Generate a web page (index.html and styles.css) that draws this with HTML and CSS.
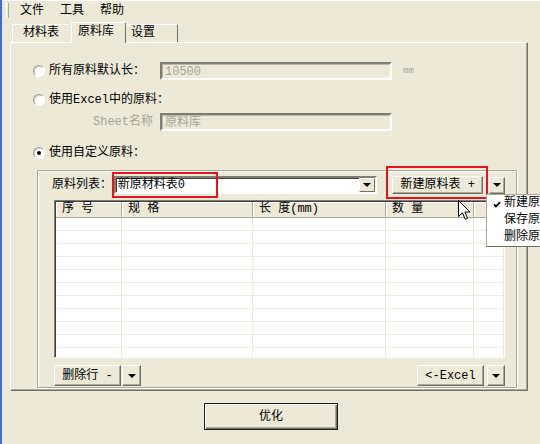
FILE: index.html
```
<html>
<head>
  <meta charset="UTF-8">
  <meta name="viewport" content="width=device-width, initial-scale=1.0">
  <title>原料库</title>
  <link rel="stylesheet" href="styles.css">
</head>
<body>
  <div class="window">
    <div class="menubar">
      <span class="grip"></span>
      <span class="menu-item">文件</span>
      <span class="menu-item">工具</span>
      <span class="menu-item">帮助</span>
    </div>

    <div class="tabs">
      <span class="tab tab-first">材料表</span>
      <span class="tab tab-active">原料库</span>
      <span class="tab tab-last">设置</span>
    </div>

    <div class="panel">
      <div class="option-row">
        <span class="radio"></span>
        <span class="option-label">所有原料默认长：</span>
        <span class="field">10500</span>
        <span class="unit">mm</span>
      </div>
      <div class="option-row row-excel">
        <span class="radio"></span>
        <span>使用Excel中的原料：</span>
      </div>
      <div class="option-row row-sheet">
        <span class="sheet-label">Sheet名称</span>
        <span class="field">原料库</span>
      </div>
      <div class="option-row row-custom">
        <span class="radio checked"></span>
        <span>使用自定义原料：</span>
      </div>

      <div class="group">
        <div class="list-row">
          <span class="list-label">原料列表：</span>
          <div class="combo">
            <span class="combo-text">新原材料表0</span>
            <span class="combo-arrow"><i class="arrow"></i></span>
            <span class="mark mark-combo"></span>
          </div>
          <button class="btn btn-new">新建原料表 +<span class="mark mark-new"></span></button>
          <button class="btn btn-drop drop-new"><i class="arrow"></i></button>
        </div>

        <div class="grid">
          <div class="grid-head">
            <span>序 号</span><span>规 格</span><span>长 度(mm)</span><span>数 量</span><span></span>
          </div>
          <div class="grid-row"><span></span><span></span><span></span><span></span><span></span></div>
          <div class="grid-row"><span></span><span></span><span></span><span></span><span></span></div>
          <div class="grid-row"><span></span><span></span><span></span><span></span><span></span></div>
          <div class="grid-row"><span></span><span></span><span></span><span></span><span></span></div>
          <div class="grid-row"><span></span><span></span><span></span><span></span><span></span></div>
          <div class="grid-row"><span></span><span></span><span></span><span></span><span></span></div>
          <div class="grid-row"><span></span><span></span><span></span><span></span><span></span></div>
          <div class="grid-row"><span></span><span></span><span></span><span></span><span></span></div>
          <div class="grid-row"><span></span><span></span><span></span><span></span><span></span></div>
          <div class="grid-row"><span></span><span></span><span></span><span></span><span></span></div>
          <div class="grid-row"><span></span><span></span><span></span><span></span><span></span></div>
        </div>

        <div class="action-row">
          <div class="split">
            <button class="btn btn-act">删除行 -</button>
            <button class="btn btn-drop drop-del"><i class="arrow"></i></button>
          </div>
          <div class="split split-right">
            <button class="btn btn-act">&lt;-Excel</button>
            <button class="btn btn-drop drop-excel"><i class="arrow"></i></button>
          </div>
        </div>
      </div>
    </div>

    <div class="footer">
      <button class="btn btn-run">优化</button>
    </div>

    <!-- dropdown of the 新建原料表 button, open (cut by the window edge) -->
    <div class="popup-menu">
      <div class="popup-item">
        <svg class="check" width="8" height="7" viewBox="0 0 8 7"><path d="M1 3.5 L3 5.5 L7 1" fill="none" stroke="#000" stroke-width="1.8"/></svg>
        新建原
      </div>
      <div class="popup-item">保存原</div>
      <div class="popup-item">删除原</div>
    </div>

    <svg class="cursor" width="13" height="21" viewBox="0 0 13 21">
      <path d="M0.5 0.5 L0.5 16.5 L4.5 12.8 L7.3 19.3 L9.6 18.3 L6.9 12 L12 12 Z" fill="#fff" stroke="#000" stroke-width="1" stroke-linejoin="miter"/>
    </svg>
  </div>
</body>
</html>
```

FILE: styles.css
```
body {
  margin: 0;
  background: #ece9d8;
}

.window {
  position: relative;
  width: 538px;
  height: 444px;
  overflow: hidden;
  border-left: 2px solid #3a6ce0;
  background: #ece9d8;
  color: #000;
  font-family: "Liberation Mono", "Noto Sans CJK SC", monospace;
  font-size: 12px;
  line-height: 14px;
}

/* menu bar */
.menubar {
  display: flex;
  align-items: center;
  height: 20px;
  padding-left: 4px;
  border-top: 1px solid #fff;
  box-sizing: border-box;
}

.grip {
  width: 1px;
  height: 15px;
  border-left: 1px solid #fff;
  border-right: 1px solid #aca899;
  margin-right: 3px;
}

.menu-item {
  padding: 0 8px;
}

/* tabs */
.tabs {
  display: flex;
  align-items: flex-end;
  height: 22px;
  padding-left: 10px;
}

.tab {
  box-sizing: border-box;
  height: 18px;
  line-height: 16px;
  border-top: 1px solid #fff;
  border-left: 1px solid #fff;
  border-right: 1px solid #716f64;
  border-radius: 2px 2px 0 0;
}

.tab-first {
  width: 59px;
  padding-left: 10px;
  border-right: none;
}

.tab-active {
  position: relative;
  z-index: 1;
  width: 55px;
  height: 21px;
  margin-bottom: -1px;
  padding-left: 6px;
  line-height: 18px;
  background: #ece9d8;
}

.tab-last {
  width: 52px;
  padding-left: 5px;
  border-left: none;
}

/* tab page */
.panel {
  box-sizing: border-box;
  width: 518px;
  height: 349px;
  margin-left: 8px;
  padding: 19px 0 0 22px;
  border-top: 1px solid #fff;
  border-left: 1px solid #fff;
  border-right: 1px solid #716f64;
  border-bottom: 1px solid #716f64;
  box-shadow: inset -1px -1px #aca899;
}

.option-row {
  display: flex;
  align-items: center;
  height: 18px;
}

.row-excel {
  margin-top: 11px;
}

.row-sheet {
  margin-top: 4px;
}

.row-custom {
  margin-top: 13px;
}

.radio {
  box-sizing: border-box;
  width: 12px;
  height: 12px;
  margin-right: 4px;
  border-radius: 50%;
  border: 1px solid;
  border-color: #9d9b90 #fff #fff #9d9b90;
  background: #fff;
  box-shadow: inset 1px 1px #d4d0c8;
  display: flex;
  align-items: center;
  justify-content: center;
}

.radio.checked::after {
  content: "";
  width: 4px;
  height: 4px;
  border-radius: 50%;
  background: #000;
}

.option-label {
  width: 111px;
}

.field {
  box-sizing: border-box;
  width: 232px;
  height: 18px;
  padding: 1px 0 0 3px;
  border: 2px solid;
  border-color: #807e74 #fff #fff #807e74;
  box-shadow: inset 1px 1px #b9b6a9;
  color: #a7a597;
  line-height: 14px;
}

.unit {
  margin-left: 11px;
  color: #a7a597;
  font-size: 9px;
}

.sheet-label {
  box-sizing: border-box;
  width: 127px;
  padding-right: 7px;
  text-align: right;
  color: #a7a597;
}

/* custom material group */
.group {
  box-sizing: border-box;
  width: 480px;
  height: 218px;
  margin: 8px 0 0 4px;
  padding: 5px 11px 0 16px;
  border: 1px solid #aca899;
  box-shadow: inset 1px 1px #fff, 1px 1px #fff;
}

.list-row {
  display: flex;
  align-items: center;
  height: 18px;
}

.list-label {
  width: 62px;
  margin-left: -2px;
}

.combo {
  position: relative;
  box-sizing: border-box;
  display: flex;
  align-items: center;
  width: 264px;
  height: 18px;
  border: 2px solid;
  border-color: #807e74 #fff #fff #807e74;
  box-shadow: inset 1px 1px #404040;
  background: #fff;
}

.combo-text {
  flex: 1;
  padding-left: 2px;
}

.combo-arrow {
  box-sizing: border-box;
  width: 16px;
  height: 14px;
  display: flex;
  align-items: center;
  justify-content: center;
  background: #ece9d8;
  border-top: 1px solid #fff;
  border-left: 1px solid #fff;
  border-right: 1px solid #716f64;
  border-bottom: 1px solid #716f64;
}

.arrow {
  width: 0;
  height: 0;
  border-left: 4px solid transparent;
  border-right: 4px solid transparent;
  border-top: 4px solid #000;
}

.btn {
  box-sizing: border-box;
  margin: 0;
  padding: 0;
  font: inherit;
  color: #000;
  background: #ece9d8;
  border: 1px solid;
  border-color: #fff #716f64 #716f64 #fff;
  box-shadow: inset -1px -1px #aca899;
  display: flex;
  align-items: center;
  justify-content: center;
}

.btn-new {
  position: relative;
  width: 91px;
  height: 18px;
  margin-left: 15px;
}

.btn-drop {
  width: 16px;
  height: 18px;
}

.drop-new {
  margin-left: 6px;
  height: 17px;
}

/* red annotation boxes */
.mark {
  position: absolute;
  border: 2px solid #e8121c;
  box-sizing: border-box;
  pointer-events: none;
}

.mark-combo {
  left: -4px;
  top: -6px;
  width: 106px;
  height: 26px;
}

.mark-new {
  left: -7px;
  top: -11px;
  width: 102px;
  height: 33px;
}

/* material grid */
.grid {
  box-sizing: border-box;
  height: 158px;
  margin-top: 6px;
  overflow: hidden;
  background: #fff;
  border: 1px solid;
  border-color: #807e74 #fff #fff #807e74;
  box-shadow: inset 1px 1px #404040;
  padding: 1px 0 0 1px;
}

.grid-head,
.grid-row {
  display: grid;
  grid-template-columns: 66px 131px 133px 88px 1fr;
}

.grid-head span {
  box-sizing: border-box;
  height: 16px;
  padding-left: 6px;
  line-height: 15px;
  background: #ece9d8;
  border-right: 1px solid #aca899;
  border-bottom: 1px solid #aca899;
  box-shadow: inset 1px 1px #fff;
}

.grid-row span {
  box-sizing: border-box;
  height: 13px;
  border-right: 1px solid #ebe9dd;
  border-bottom: 1px solid #ebe9dd;
}

.action-row {
  display: flex;
  justify-content: space-between;
  margin-top: 7px;
}

.split {
  display: flex;
  gap: 1px;
}

.split-right {
  gap: 3px;
}

.btn-act {
  width: 67px;
  height: 21px;
}

.drop-del {
  width: 19px;
  height: 21px;
}

.drop-excel {
  width: 18px;
  height: 21px;
}

/* bottom */
.footer {
  margin-top: 12px;
  padding-left: 202px;
}

.btn-run {
  width: 134px;
  height: 27px;
  border: 1px solid #1c1c1c;
  box-shadow: inset 1px 1px #fff, inset -1px -1px #716f64, inset -2px -2px #aca899;
}

/* open dropdown menu */
.popup-menu {
  position: absolute;
  left: 484px;
  top: 194px;
  width: 60px;
  background: #fff;
  border-top: 1px solid #aca899;
  border-left: 1px solid #aca899;
  border-bottom: 1px solid #716f64;
}

.popup-item {
  position: relative;
  height: 17px;
  line-height: 17px;
  padding-left: 17px;
  white-space: nowrap;
}

.check {
  position: absolute;
  left: 6px;
  top: 6px;
}

.cursor {
  position: absolute;
  left: 456px;
  top: 200px;
}
```
